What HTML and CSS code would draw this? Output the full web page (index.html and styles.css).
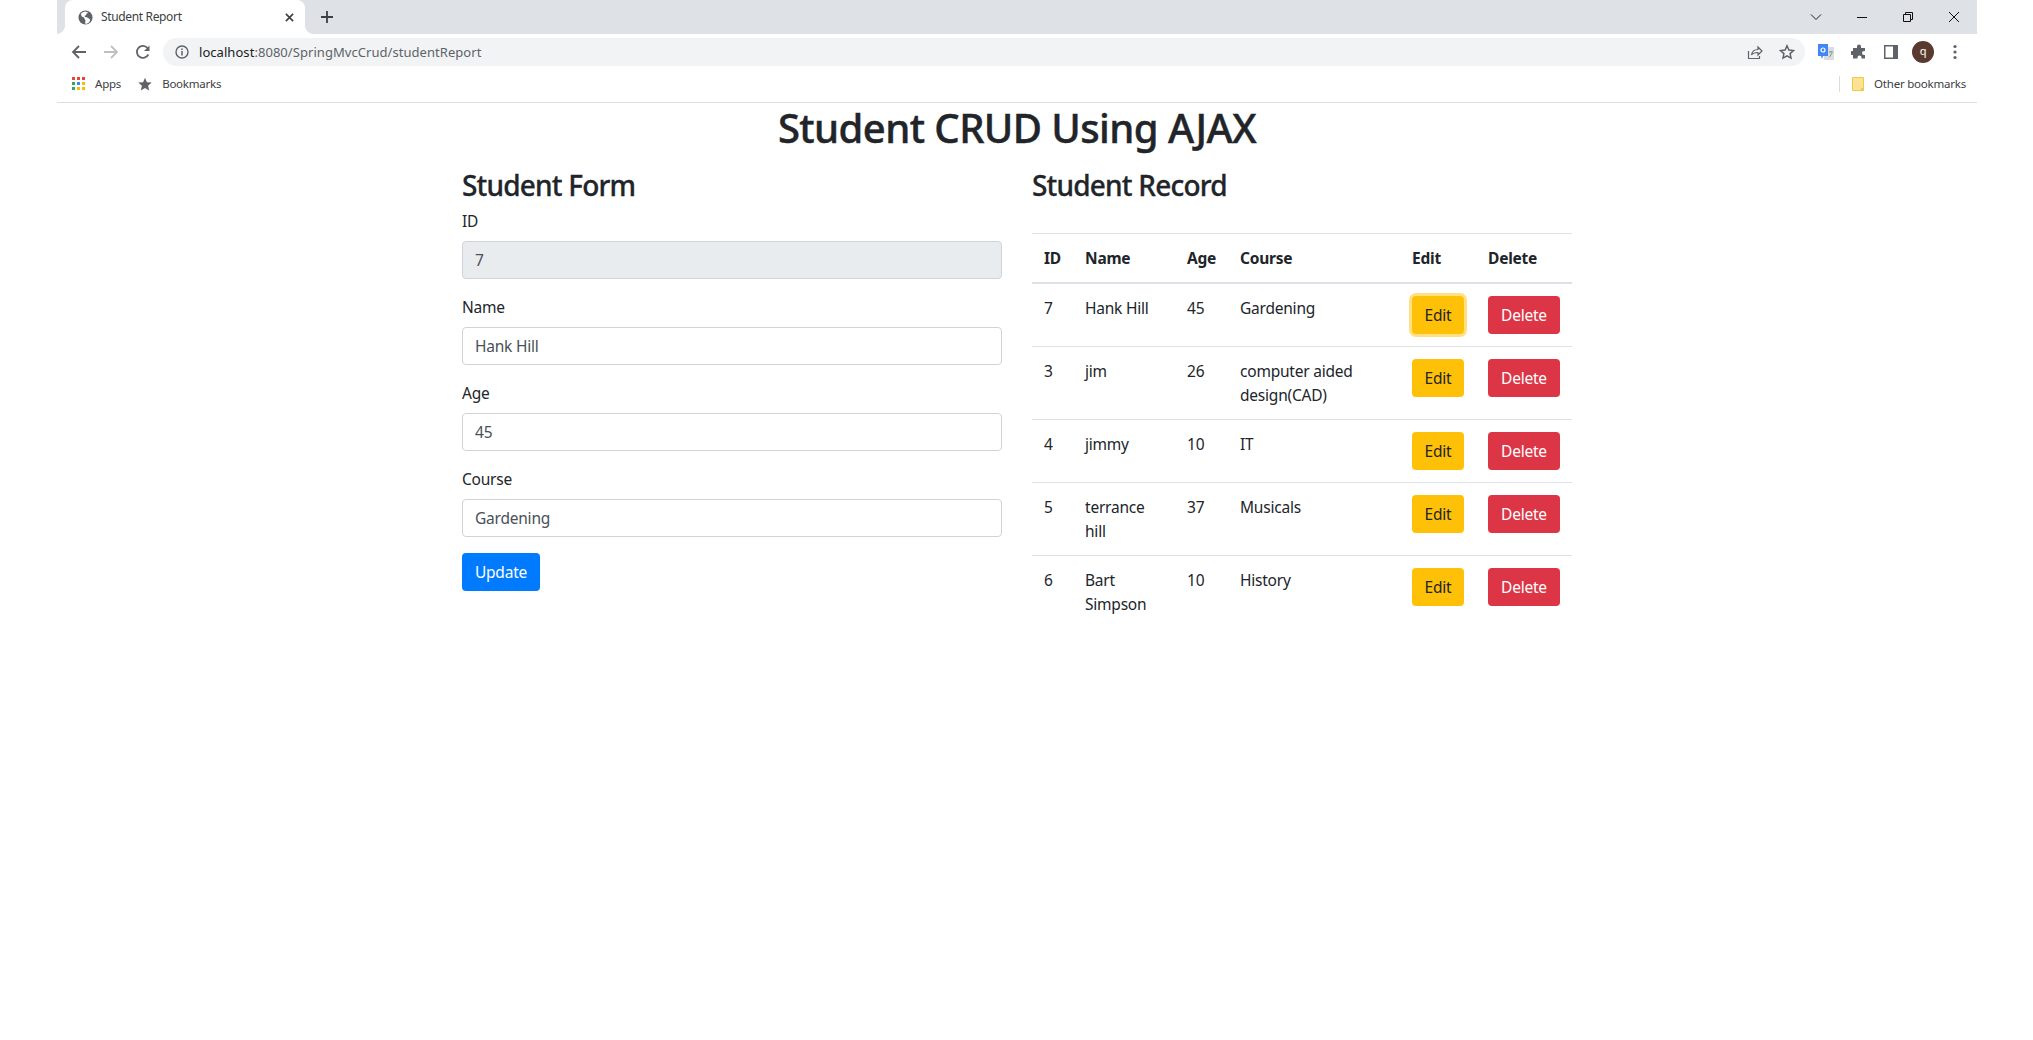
FILE: index.html
```html
<!DOCTYPE html>
<html lang="en">
<head>
<meta charset="utf-8">
<title>Student Report</title>
<link rel="stylesheet" href="styles.css">
</head>
<body>
<div class="window">
  <header class="chrome">
    <div class="tabstrip">
      <div class="tab">
        <svg class="fav" viewBox="0 0 16 16"><circle cx="8" cy="8" r="7.5" fill="#5f6368"/><path d="M8 1.500c-1.500.3-4 1-5 2.500l1 3 2.500 1 .5 1.500L8 11l-.5 3.500C9 15 11 14 12 13l1-3-3-2-2.500-.5-.5-1.500 1.500-.5L9 4l2-1z" fill="#fff"/></svg>
        <span class="tab-title">Student Report</span>
        <svg class="tab-x" viewBox="0 0 10 10"><path d="M1 1l8 8M9 1l-8 8" stroke="#3c4043" stroke-width="1.800"/></svg>
      </div>
      <svg class="newtab" viewBox="0 0 12 12"><path d="M6 0v12M0 6h12" stroke="#3c4043" stroke-width="1.800"/></svg>
      <div class="winctl">
        <svg class="ctl" viewBox="0 0 12 12"><path d="M1 3.500l5 5 5-5" fill="none" stroke="#202124" stroke-width="1"/></svg>
        <svg class="ctl" viewBox="0 0 12 12"><path d="M1 6.500h10" stroke="#111" stroke-width="1"/></svg>
        <svg class="ctl" viewBox="0 0 12 12"><path d="M1.500 3.500h7v7h-7zM3.500 3.500v-2h7v7h-2" fill="none" stroke="#111" stroke-width="1"/></svg>
        <svg class="ctl" viewBox="0 0 12 12"><path d="M1 1l10 10M11 1L1 11" stroke="#111" stroke-width="1"/></svg>
      </div>
    </div>
    <div class="toolbar">
      <svg class="nav" viewBox="0 0 16 16"><path d="M15 8H2.500M8 2L2 8l6 6" fill="none" stroke="#5f6368" stroke-width="1.800"/></svg>
      <svg class="nav" viewBox="0 0 16 16"><path d="M1 8h12.500M8 2l6 6-6 6" fill="none" stroke="#bdc1c6" stroke-width="1.800"/></svg>
      <svg class="nav" viewBox="0 0 16 16"><path d="M13.300 10.500A6 6 0 1 1 12.500 4" fill="none" stroke="#5f6368" stroke-width="1.800"/><path d="M14.500 1.500V7H9z" fill="#5f6368"/></svg>
      <div class="omnibox">
        <svg class="info" viewBox="0 0 14 14"><circle cx="7" cy="7" r="6" fill="none" stroke="#5f6368" stroke-width="1.400"/><path d="M7 6v4.500M7 3.500v1.400" stroke="#5f6368" stroke-width="1.500"/></svg>
        <span class="url"><span class="host">localhost</span>:8080/SpringMvcCrud/studentReport</span>
        <svg class="omni-share" viewBox="0 0 16 16"><path d="M1.500 7v7.500h11V12" fill="none" stroke="#5f6368" stroke-width="1.200"/><path d="M4.500 11c.5-3.500 3-5.500 6.500-5.500V3l4 4-4 4V8.500c-2.500 0-5 .5-6.500 2.500z" fill="none" stroke="#5f6368" stroke-width="1.200"/></svg>
        <svg class="omni-star" viewBox="0 0 16 16"><path d="M8 1.800l1.900 4.200 4.600.5-3.400 3.100.9 4.500L8 11.800l-4 2.300.9-4.500L1.500 6.500 6.100 6z" fill="none" stroke="#5f6368" stroke-width="1.500"/></svg>
      </div>
      <svg class="ext-translate" viewBox="0 0 16 16"><path d="M6 3h10v13H6z" fill="#dadce0"/><path d="M0 0h10v12H5l-1 3-1-3H0z" fill="#4285f4"/><circle cx="5" cy="6" r="2" fill="none" stroke="#fff" stroke-width="1.200"/><path d="M11 8h4M13 7v1M11.500 13l2.500-4" stroke="#80868b" stroke-width=".9"/></svg>
      <svg class="ext-puzzle" viewBox="0 0 16 16"><path d="M6 2.500a2 2 0 0 1 4 0V4h4v3h-1a2 2 0 0 0 0 4h1v3.500h-3.500v-1a2 2 0 0 0-4 0v1H2V11H1a2 2 0 0 1 0-4h1V4h4z" fill="#5f6368"/></svg>
      <svg class="ext-side" viewBox="0 0 14 14"><path d="M0 0h14v14H0z" fill="#5f6368"/><path d="M1.500 1.500H9v11H1.500z" fill="#fff"/></svg>
      <div class="avatar">q</div>
      <svg class="ext-dots" viewBox="0 0 4 16"><circle cx="2" cy="2.500" r="1.600" fill="#5f6368"/><circle cx="2" cy="8" r="1.600" fill="#5f6368"/><circle cx="2" cy="13.500" r="1.600" fill="#5f6368"/></svg>
    </div>
    <div class="bookmarks">
      <svg class="apps" viewBox="0 0 13 13">
        <rect width="3" height="3" fill="#ea4335"/><rect x="5" width="3" height="3" fill="#ea4335"/><rect x="10" width="3" height="3" fill="#ea4335"/>
        <rect y="5" width="3" height="3" fill="#34a853"/><rect x="5" y="5" width="3" height="3" fill="#4285f4"/><rect x="10" y="5" width="3" height="3" fill="#fbbc04"/>
        <rect y="10" width="3" height="3" fill="#34a853"/><rect x="5" y="10" width="3" height="3" fill="#fbbc04"/><rect x="10" y="10" width="3" height="3" fill="#fbbc04"/>
      </svg>
      <span class="bm-label">Apps</span>
      <svg class="bm-star" viewBox="0 0 14 14"><path d="M7 .8l1.900 4.400 4.800.4-3.600 3.200 1.100 4.700L7 11l-4.200 2.500 1.100-4.700L.3 5.600l4.800-.4z" fill="#5f6368"/></svg>
      <span class="bm-label">Bookmarks</span>
      <span class="bm-divider"></span>
      <svg class="bm-folder" viewBox="0 0 12 14"><path d="M.5.500h11v13H.5z" fill="#fde293" stroke="#f1c947"/><path d="M9 11h2.500v2.500H9z" fill="#f1c947"/></svg>
      <span class="bm-label">Other bookmarks</span>
    </div>
  </header>

  <main class="container">
    <h1 class="title">Student CRUD Using AJAX</h1>
    <div class="row">
      <section class="col">
        <h2 class="heading">Student Form</h2>
        <form>
          <div class="field"><label class="label">ID</label><input class="input" type="text" value="7" disabled></div>
          <div class="field"><label class="label">Name</label><input class="input" type="text" value="Hank Hill"></div>
          <div class="field"><label class="label">Age</label><input class="input" type="text" value="45"></div>
          <div class="field"><label class="label">Course</label><input class="input" type="text" value="Gardening"></div>
          <button class="btn btn-blue" type="button">Update</button>
        </form>
      </section>
      <section class="col">
        <h2 class="heading heading-table">Student Record</h2>
        <table class="table">
          <colgroup><col class="c-id"><col class="c-name"><col class="c-age"><col class="c-course"><col class="c-edit"><col class="c-del"></colgroup>
          <thead><tr><th>ID</th><th>Name</th><th>Age</th><th>Course</th><th>Edit</th><th>Delete</th></tr></thead>
          <tbody>
            <tr><td>7</td><td>Hank Hill</td><td>45</td><td>Gardening</td><td><button class="btn btn-yellow focus" type="button">Edit</button></td><td><button class="btn btn-red" type="button">Delete</button></td></tr>
            <tr><td>3</td><td>jim</td><td>26</td><td>computer aided design(CAD)</td><td><button class="btn btn-yellow" type="button">Edit</button></td><td><button class="btn btn-red" type="button">Delete</button></td></tr>
            <tr><td>4</td><td>jimmy</td><td>10</td><td>IT</td><td><button class="btn btn-yellow" type="button">Edit</button></td><td><button class="btn btn-red" type="button">Delete</button></td></tr>
            <tr><td>5</td><td>terrance hill</td><td>37</td><td>Musicals</td><td><button class="btn btn-yellow" type="button">Edit</button></td><td><button class="btn btn-red" type="button">Delete</button></td></tr>
            <tr><td>6</td><td>Bart Simpson</td><td>10</td><td>History</td><td><button class="btn btn-yellow" type="button">Edit</button></td><td><button class="btn btn-red" type="button">Delete</button></td></tr>
          </tbody>
        </table>
      </section>
    </div>
  </main>
</div>
</body>
</html>
```

FILE: styles.css
```css
* { box-sizing: border-box; }
html, body { margin: 0; padding: 0; background: #fff; }
body {
  font-family: "Noto Sans", "Open Sans", "Liberation Sans", sans-serif;
  font-size: 15.5px;
  line-height: 24px;
  letter-spacing: -.22px;
  color: #212529;
  height: 1040px;
  overflow: hidden;
}
svg { display: block; flex: none; }
.window { width: 1920px; margin-left: 57px; }

/* browser chrome */
.chrome { border-bottom: 1px solid #dadce0; height: 103px; }
.tabstrip { height: 34px; background: #dee1e6; display: flex; align-items: center; padding-left: 8px; }
.tab { position: relative; width: 240px; height: 34px; background: #fff; border-radius: 8px 8px 0 0; display: flex; align-items: center; padding-left: 13px; font-size: 12px; color: #3c4043; }
.tab::before, .tab::after { content: ""; position: absolute; bottom: 0; width: 8px; height: 8px; }
.tab::before { left: -8px; background: radial-gradient(circle at 0 0, transparent 7.500px, #fff 8px); }
.tab::after { right: -8px; background: radial-gradient(circle at 100% 0, transparent 7.500px, #fff 8px); }
.fav { width: 15px; height: 15px; }
.tab-title { margin-left: 8px; flex: 1; letter-spacing: -.35px; }
.tab-x { width: 9px; height: 9px; margin-right: 11px; }
.newtab { width: 12px; height: 12px; margin-left: 16px; }
.winctl { margin-left: auto; display: flex; gap: 34px; padding-right: 17px; }
.ctl { width: 12px; height: 12px; }
.toolbar { height: 34px; display: flex; align-items: center; padding-left: 14px; padding-top: 1px; }
.nav { width: 16px; height: 16px; margin-right: 16px; }
.omnibox { width: 1642px; height: 28px; margin-left: -4px; background: #f1f3f4; border-radius: 14px; display: flex; align-items: center; padding-left: 12px; }
.info { width: 14px; height: 14px; }
.url { margin-left: 10px; font-size: 13px; color: #5f6368; letter-spacing: .05px; flex: 1; }
.host { color: #202124; }
.omni-share { width: 16px; height: 16px; margin-right: 16px; }
.omni-star { width: 16px; height: 16px; margin-right: 10px; }
.ext-translate { width: 16px; height: 16px; margin-left: 13px; }
.ext-puzzle { width: 16px; height: 16px; margin-left: 17px; }
.ext-side { width: 14px; height: 14px; margin-left: 17px; }
.avatar { width: 22px; height: 22px; margin-left: 14px; border-radius: 50%; background: #5a3a2e; color: #fff; font-size: 11px; line-height: 20px; text-align: center; }
.ext-dots { width: 4px; height: 16px; margin-left: 19px; }
.bookmarks { height: 33px; display: flex; align-items: center; padding-left: 15px; padding-bottom: 2px; font-size: 11.500px; color: #3c4043; }
.apps { width: 13px; height: 13px; margin-right: 10px; }
.bm-label { letter-spacing: -.22px; }
.bm-star { width: 14px; height: 14px; margin: 0 10px 0 17px; }
.bm-divider { width: 1px; height: 16px; background: #dadce0; margin-left: auto; }
.bm-folder { width: 12px; height: 14px; margin: 0 10px 0 12px; }
.bm-divider ~ .bm-label { margin-right: 11px; }

/* page */
.container { width: 1140px; margin: 0 auto; padding: 1px 15px 0; }
.title { margin: 0; font-size: 40px; line-height: 48px; font-weight: 500; letter-spacing: -.57px; -webkit-text-stroke: .45px #212529; text-align: center; }
.row { display: flex; gap: 30px; margin-top: 14px; }
.col { width: 540px; }
.heading { margin: 0 0 5px; font-size: 28px; line-height: 38px; font-weight: 500; letter-spacing: -.8px; -webkit-text-stroke: .3px #212529; }
.field { margin-bottom: 16px; }
.label { display: block; margin-bottom: 8px; }
.input { display: block; width: 100%; height: 38px; padding: 6px 12px; font: inherit; letter-spacing: inherit; color: #495057; background: #fff; border: 1px solid #ced4da; border-radius: 4px; }
.input:disabled { background: #e9ecef; opacity: 1; }
.btn { display: block; height: 38px; padding: 0; font: inherit; letter-spacing: inherit; text-align: center; border: 1px solid transparent; border-radius: 4px; }
.btn-blue { width: 78px; background: #007bff; color: #fff; }
.btn-yellow { width: 52px; background: #ffc107; color: #212529; }
.btn-red { width: 72px; background: #dc3545; color: #fff; }
.focus { box-shadow: 0 0 0 3px rgba(255, 193, 7, .5); }
.heading-table { margin-bottom: 29px; }
.table { width: 540px; border-collapse: collapse; table-layout: fixed; }
.c-id { width: 41px; } .c-name { width: 102px; } .c-age { width: 53px; } .c-course { width: 172px; } .c-edit { width: 76px; } .c-del { width: 96px; }
.table th, .table td { padding: 12px; text-align: left; vertical-align: top; border-top: 1px solid #dee2e6; }
.table th { font-weight: 700; border-bottom: 2px solid #dee2e6; }
```
